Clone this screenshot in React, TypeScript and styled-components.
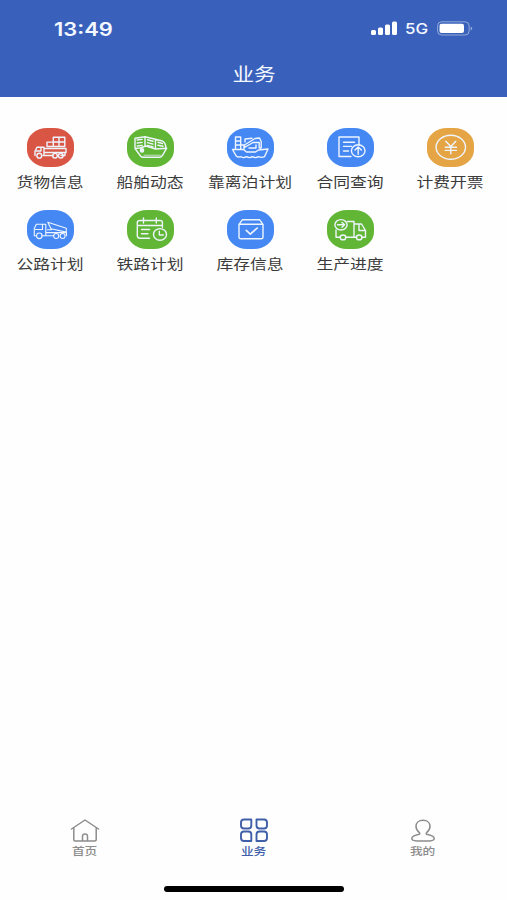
import React from 'react';
import styled, { createGlobalStyle } from 'styled-components';

const Global = createGlobalStyle`
  * { box-sizing: border-box; }
  body { margin: 0; background: #fff; font-family: "Noto Sans CJK SC", sans-serif; }
`;

const Screen = styled.div`
  width: 507px;
  height: 900px;
  display: flex;
  flex-direction: column;
  overflow: hidden;
  background: #fefefe;
`;

const Header = styled.header`
  height: 97px;
  flex: none;
  background: #3961bb;
  color: #f4f8ff;
`;

const StatusBar = styled.div`
  height: 57px;
  padding: 0 34px 0 54px;
  display: flex;
  align-items: center;
  justify-content: space-between;
`;

const Wide = styled.span<{ $ratio?: number; $origin?: string }>`
  display: block;
  white-space: nowrap;
  transform: scaleX(${(p) => p.$ratio ?? 1.2});
  transform-origin: ${(p) => p.$origin ?? 'center'};
`;

const Time = styled(Wide)`
  font: 600 18.3px/24px Inter, sans-serif;
`;

const Indicators = styled.div`
  display: flex;
  align-items: center;
`;

const Network = styled(Wide)`
  width: 24px;
  margin: 0 8px 0 7px;
  font: 500 15px/20px Inter, sans-serif;
`;

const Title = styled.h1`
  margin: 0;
  height: 32px;
  display: flex;
  align-items: center;
  justify-content: center;
  font-size: 18px;
  line-height: 32px;
  font-weight: 400;
`;

const Grid = styled.main`
  flex: 1;
  display: grid;
  grid-template-columns: repeat(5, 100px);
  grid-auto-rows: 82px;
  padding: 31px 0 0 0.4px;
`;

const Entry = styled.div`
  display: flex;
  flex-direction: column;
  align-items: center;
`;

const Tile = styled.div<{ $color: string }>`
  width: 47px;
  height: 39px;
  border-radius: 20px / 17px;
  background: ${(p) => p.$color};
`;

const TileArt = styled.svg`
  display: block;
  width: 47px;
  height: 39px;
  fill: none;
  stroke: #eef5ff;
  stroke-width: 1.4;
  stroke-linecap: round;
  stroke-linejoin: round;
`;

const Label = styled(Wide)`
  margin-top: 3.5px;
  font-size: 14px;
  line-height: 20px;
  color: #3b3b3b;
`;

const TabBar = styled.nav`
  height: 66px;
  flex: none;
  display: grid;
  grid-template-columns: repeat(3, 1fr);
`;

const Tab = styled.div<{ $active?: boolean }>`
  display: flex;
  flex-direction: column;
  align-items: center;
  color: ${(p) => (p.$active ? '#405fa9' : '#8c8c8c')};
`;

const TabArt = styled.svg`
  width: 30px;
  height: 26px;
  fill: none;
  stroke: currentColor;
  stroke-linecap: round;
  stroke-linejoin: round;
`;

const TabLabel = styled(Wide)`
  font-size: 10.6px;
  line-height: 16px;
  font-weight: 500;
  margin-top: 0;
`;

const HomeArea = styled.footer`
  height: 17px;
  flex: none;
  display: flex;
  justify-content: center;
  padding-top: 3px;
`;

const HomeIndicator = styled.div`
  width: 180px;
  height: 6px;
  border-radius: 3px;
  background: #000;
`;

const entries: { label: string; color: string; art: React.ReactNode }[] = [
  {
    label: '货物信息',
    color: '#d95645',
    art: (
      <>
        <path d="M26.3 9.3h11.5v9.2H20v-4.4h6.3zM26.3 14h11.5M32 9.3v9.2M26.3 14v4.5" />
        <path d="M8 27.5v-4.2l2-4h7v8.2M9.5 23h4.5v-3.5M17 20.5h22v4H17M16 27.5h10M34 27.5h4v-3" />
        <circle cx="12.3" cy="27.7" r="2.4" />
        <circle cx="28" cy="27.7" r="2.3" />
        <circle cx="33.8" cy="27.7" r="2.3" />
      </>
    ),
  },
  {
    label: '船舶动态',
    color: '#61b735',
    art: (
      <>
        <path d="M8 20.5V10.2l10-1.5 16.500 4q4 1.200 4.300 6.500M18 8.700v9.700M28.500 11.300v8.700M8 20.500l5.500 7.500q1.200 1.300 3 1.300h15.800q2 0 3.200-2l4.200-7.100-11.200.8-9.500-3-6 2z" />
        <path d="M10.2 12l5-.6M10.2 15l5-.6M10.2 18l5-.6M20.5 11.800l5.500 1.500M20.500 14.600l5.500 1.500M20.500 17.400l5.500 1.500M31 14.300l4.500 1.200M31 17.300l5 1" />
        <path d="M17 27.2h16.500" strokeWidth=".7" />
        <circle cx="15" cy="22.4" r="1.6" fill="#eef5ff" />
      </>
    ),
  },
  {
    label: '靠离泊计划',
    color: '#4588f3',
    art: (
      <>
        <path d="M5.5 21.500h11l3 2.500h9l3-2 9.500-1-3.500 7.700q-3 1.400-6 0-3 1.800-6 0-3 1.800-6 0-3 1.800-5.500 0-3 1-4.800-.7z" />
        <path d="M8.500 21V9h5.200v12M8.500 13h5.200M8.500 17h8.500v4M17.500 17l10.500-6.500 4.500-.5 1.700 3.500V20h-2v-5.500l-6.200 0-8.500 5zM18 14v-3l7-.7M22 20h7v-3" />
      </>
    ),
  },
  {
    label: '合同查询',
    color: '#4588f3',
    art: (
      <>
        <path d="M24 28.5H12V9h20v8M16.5 14.2h11M16.5 18.4h8M16.5 23h5" />
        <ellipse cx="31.200" cy="22.800" rx="6.800" ry="6" />
        <path d="M31.2 26.3v-7M28 22l3.2-3 3.2 3" />
      </>
    ),
  },
  {
    label: '计费开票',
    color: '#e5a544',
    art: (
      <>
        <ellipse cx="23.8" cy="19.2" rx="14.7" ry="12" />
        <path d="M18.8 13.2l5 5.3 5-5.3M23.8 18.5v7.3M18.2 19.2h11.2M18.2 22.4h11.2" />
      </>
    ),
  },
  {
    label: '公路计划',
    color: '#4588f3',
    art: (
      <>
        <g strokeWidth="1.1">
          <path d="M9 25.800H7.300v-7.300l2-4.200h9.500v11.500h-4M8.500 19.500h7v-5M20.800 12.300l18.500 6v3.800L24 18.800zM19 22.600h20.500v3.200M19 25.800h7.500M20.500 19.700h4" />
          <circle cx="12.3" cy="25.8" r="2.8" />
          <circle cx="29.2" cy="26" r="2.5" />
          <circle cx="35.6" cy="26" r="2.5" />
        </g>
      </>
    ),
  },
  {
    label: '铁路计划',
    color: '#61b735',
    art: (
      <>
        <path d="M22.5 28.3H13q-2.7 0-2.7-2.7V12.3q0-1.8 2.7-1.8h20q2.4 0 2.4 1.8v5M10.3 15.5h25M16.5 8v5M29.3 8v5M14.5 19.5h8M14.5 23.8h6.5" />
        <ellipse cx="33" cy="24.4" rx="6.5" ry="5.8" />
        <path d="M32.3 21.2v3.8h4" />
      </>
    ),
  },
  {
    label: '库存信息',
    color: '#4588f3',
    art: (
      <>
        <path d="M12 14.3L15.5 9.7h17l3.5 4.6v12.9q0 1.6-1.8 1.6H13.8q-1.8 0-1.8-1.6zM12 14.3h24" />
        <path d="M19.3 20.4l4 3.8 7-6.2" strokeWidth="1.6" />
      </>
    ),
  },
  {
    label: '生产进度',
    color: '#61b735',
    art: (
      <>
        <ellipse cx="14" cy="14.8" rx="6.1" ry="5.2" />
        <path d="M10.500 14.800h7M15 12.400l2.600 2.400-2.600 2.400M20.500 11.500h6.500v15.700h-8M9 20v7.200h4M27 14h7.500l4 6.500v6.700h-3.500M27 27.200h2.500M32 14.500v6h6.500" />
        <ellipse cx="16" cy="27.4" rx="2.8" ry="2.4" />
        <ellipse cx="32.2" cy="27.4" rx="2.8" ry="2.4" />
      </>
    ),
  },
];

function SignalIcon() {
  return (
    <svg width="27" height="15" viewBox="0 0 27 15" fill="#fff">
      <rect x="0" y="9" width="5" height="5" rx="1.5" />
      <rect x="7" y="6.5" width="5" height="7.5" rx="1.5" />
      <rect x="14" y="3.5" width="5" height="10.5" rx="1.5" />
      <rect x="21" y="0.5" width="5" height="13.5" rx="1.5" />
    </svg>
  );
}

function BatteryIcon() {
  return (
    <svg width="36" height="15" viewBox="0 0 36 15">
      <rect x="0.6" y="0.8" width="31.5" height="13.2" rx="4" fill="none" stroke="#fff" strokeOpacity=".45" />
      <rect x="2.5" y="2.7" width="24.5" height="9.4" rx="2" fill="#fff" />
      <path d="M33.7 5.5q3 2 0 4z" fill="#fff" fillOpacity=".5" />
    </svg>
  );
}

export default function App() {
  return (
    <Screen>
      <Global />
      <Header>
        <StatusBar>
          <Time $origin="left">13:49</Time>
          <Indicators>
            <SignalIcon />
            <Network $ratio={1.13} $origin="left">5G</Network>
            <BatteryIcon />
          </Indicators>
        </StatusBar>
        <Title>
          <Wide>业务</Wide>
        </Title>
      </Header>
      <Grid>
        {entries.map((e) => (
          <Entry key={e.label}>
            <Tile $color={e.color}>
              <TileArt viewBox="0 0 47 39">{e.art}</TileArt>
            </Tile>
            <Label>{e.label}</Label>
          </Entry>
        ))}
      </Grid>
      <TabBar>
        <Tab>
          <TabArt viewBox="0 0 30 26" strokeWidth="1.5">
            <path d="M1.5 12L15 3l13.5 9M3.8 10.7v12.1q0 1.2 1.3 1.2h19.8q1.3 0 1.3-1.2V10.7M12.5 24v-4.8q0-2.2 2.5-2.2t2.5 2.2V24" />
          </TabArt>
          <TabLabel>首页</TabLabel>
        </Tab>
        <Tab $active>
          <TabArt viewBox="0 0 30 26" strokeWidth="1.9">
            <path d="M5 2.500h7.300v6q0 3-3 3H5q-3 0-3-3v-3q0-3 3-3zM17.500 2.500H25q3 0 3 3v3q0 3-3 3h-4.500q-3 0-3-3zM5 14.500h4.300q3 0 3 3v6.500H5q-3 0-3-3v-3.500q0-3 3-3zM20.500 14.500H25q3 0 3 3V21q0 3-3 3h-7.500v-6.500q0-3 3-3z" />
          </TabArt>
          <TabLabel>业务</TabLabel>
        </Tab>
        <Tab>
          <TabArt viewBox="0 0 30 26" strokeWidth="1.5">
            <path d="M15 3.3c-4.3 0-7 2.5-7 6 0 3 1.4 4.7 3.1 6.1 1.4 1.2.7 1.8-1 2.2-4 .9-6.3 2.1-6.3 4 0 1.7 2 2.3 5 2.3h12.4c3 0 5-.6 5-2.3 0-1.9-2.3-3.1-6.3-4-1.700-.4-2.400-1-1-2.200 1.700-1.400 3.100-3.100 3.100-6.100 0-3.500-2.700-6-7-6z" />
          </TabArt>
          <TabLabel>我的</TabLabel>
        </Tab>
      </TabBar>
      <HomeArea>
        <HomeIndicator />
      </HomeArea>
    </Screen>
  );
}
